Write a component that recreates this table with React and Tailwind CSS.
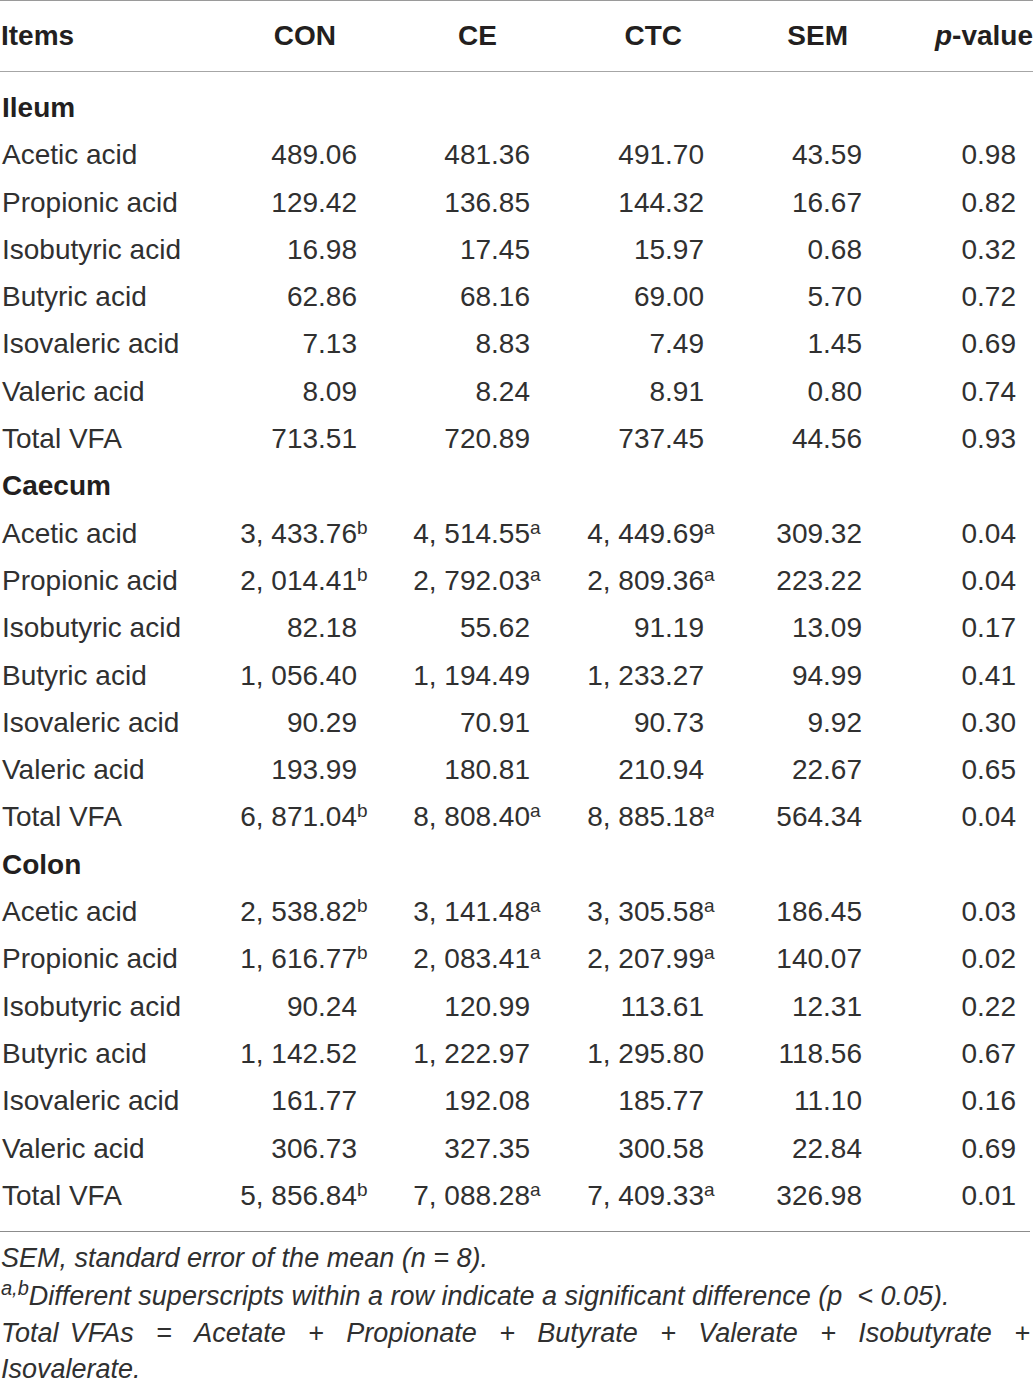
const sections = [
  {
    name: 'Ileum',
    rows: [
      ['Acetic acid', ['489.06'], ['481.36'], ['491.70'], '43.59', '0.98'],
      ['Propionic acid', ['129.42'], ['136.85'], ['144.32'], '16.67', '0.82'],
      ['Isobutyric acid', ['16.98'], ['17.45'], ['15.97'], '0.68', '0.32'],
      ['Butyric acid', ['62.86'], ['68.16'], ['69.00'], '5.70', '0.72'],
      ['Isovaleric acid', ['7.13'], ['8.83'], ['7.49'], '1.45', '0.69'],
      ['Valeric acid', ['8.09'], ['8.24'], ['8.91'], '0.80', '0.74'],
      ['Total VFA', ['713.51'], ['720.89'], ['737.45'], '44.56', '0.93'],
    ],
  },
  {
    name: 'Caecum',
    rows: [
      ['Acetic acid', ['3, 433.76', 'b'], ['4, 514.55', 'a'], ['4, 449.69', 'a'], '309.32', '0.04'],
      ['Propionic acid', ['2, 014.41', 'b'], ['2, 792.03', 'a'], ['2, 809.36', 'a'], '223.22', '0.04'],
      ['Isobutyric acid', ['82.18'], ['55.62'], ['91.19'], '13.09', '0.17'],
      ['Butyric acid', ['1, 056.40'], ['1, 194.49'], ['1, 233.27'], '94.99', '0.41'],
      ['Isovaleric acid', ['90.29'], ['70.91'], ['90.73'], '9.92', '0.30'],
      ['Valeric acid', ['193.99'], ['180.81'], ['210.94'], '22.67', '0.65'],
      ['Total VFA', ['6, 871.04', 'b'], ['8, 808.40', 'a'], ['8, 885.18', 'a', true], '564.34', '0.04'],
    ],
  },
  {
    name: 'Colon',
    rows: [
      ['Acetic acid', ['2, 538.82', 'b'], ['3, 141.48', 'a'], ['3, 305.58', 'a'], '186.45', '0.03'],
      ['Propionic acid', ['1, 616.77', 'b'], ['2, 083.41', 'a'], ['2, 207.99', 'a'], '140.07', '0.02'],
      ['Isobutyric acid', ['90.24'], ['120.99'], ['113.61'], '12.31', '0.22'],
      ['Butyric acid', ['1, 142.52'], ['1, 222.97'], ['1, 295.80'], '118.56', '0.67'],
      ['Isovaleric acid', ['161.77'], ['192.08'], ['185.77'], '11.10', '0.16'],
      ['Valeric acid', ['306.73'], ['327.35'], ['300.58'], '22.84', '0.69'],
      ['Total VFA', ['5, 856.84', 'b'], ['7, 088.28', 'a'], ['7, 409.33', 'a'], '326.98', '0.01'],
    ],
  },
]

const grid = 'grid grid-cols-[200px_169px_173px_174px_158px_159px]'

const Value = ({ v }) => {
  const [num, sup, italic] = v
  return (
    <div className="text-right pr-[12px] whitespace-nowrap">
      {num}
      <span className="inline-block w-0 text-left">
        <span className={`relative top-[-9px] text-[19px] leading-none ${italic ? 'italic' : ''}`}>{sup}</span>
      </span>
    </div>
  )
}

const App = () => {
  return (
    <div className="w-[1033px] bg-white text-[#231f20] font-['Liberation_Sans',Arial,sans-serif] text-[28px]">
      <div className="border-t border-[#9a9a9a]" />
      <div className={`${grid} h-[70px] items-center font-bold`}>
        <div className="pl-[1px]">Items</div>
        <div className="text-right pr-[33px]">CON</div>
        <div className="text-right pr-[45px]">CE</div>
        <div className="text-right pr-[34px]">CTC</div>
        <div className="text-right pr-[26px]">SEM</div>
        <div className="text-right whitespace-nowrap"><span className="italic">p</span>-value</div>
      </div>
      <div className="border-t border-[#a6a6a6]" />

      <div className="pt-[12px] pb-[12px] text-[#303030]">
        {sections.map(sec => (
          <div key={sec.name}>
            <div className="leading-[47.3px] h-[47.3px] font-bold text-[#231f20] pl-[2px]">{sec.name}</div>
            {sec.rows.map((r, i) => (
              <div key={i} className={`${grid} leading-[47.3px] h-[47.3px]`}>
                <div className="pl-[2px] whitespace-nowrap">{r[0]}</div>
                <Value v={r[1]} />
                <Value v={r[2]} />
                <Value v={r[3]} />
                <div className="text-right pr-[12px]">{r[4]}</div>
                <div className="text-right pr-[17px]">{r[5]}</div>
              </div>
            ))}
          </div>
        ))}
      </div>

      <div className="border-t border-[#8c8c8c] w-[1030px]" />
      <div className="pt-[8px] italic text-[27px] leading-[37.5px] text-[#303030] w-[1030px]">
        <p className="pl-[1px]">SEM, standard error of the mean (n = 8).</p>
        <p className="pl-[1px] whitespace-nowrap">
          <span className="relative top-[-10px] text-[20px] leading-none">a,b</span>Different superscripts within a row indicate a significant difference (p &nbsp;&lt; 0.05).
        </p>
        <p className="pl-[1px] text-justify leading-[36px]">
          Total VFAs &nbsp;= &nbsp;Acetate &nbsp;+ &nbsp;Propionate &nbsp;+ &nbsp;Butyrate &nbsp;+ &nbsp;Valerate &nbsp;+ &nbsp;Isobutyrate &nbsp;+ Isovalerate.
        </p>
      </div>
    </div>
  )
}

export default App
